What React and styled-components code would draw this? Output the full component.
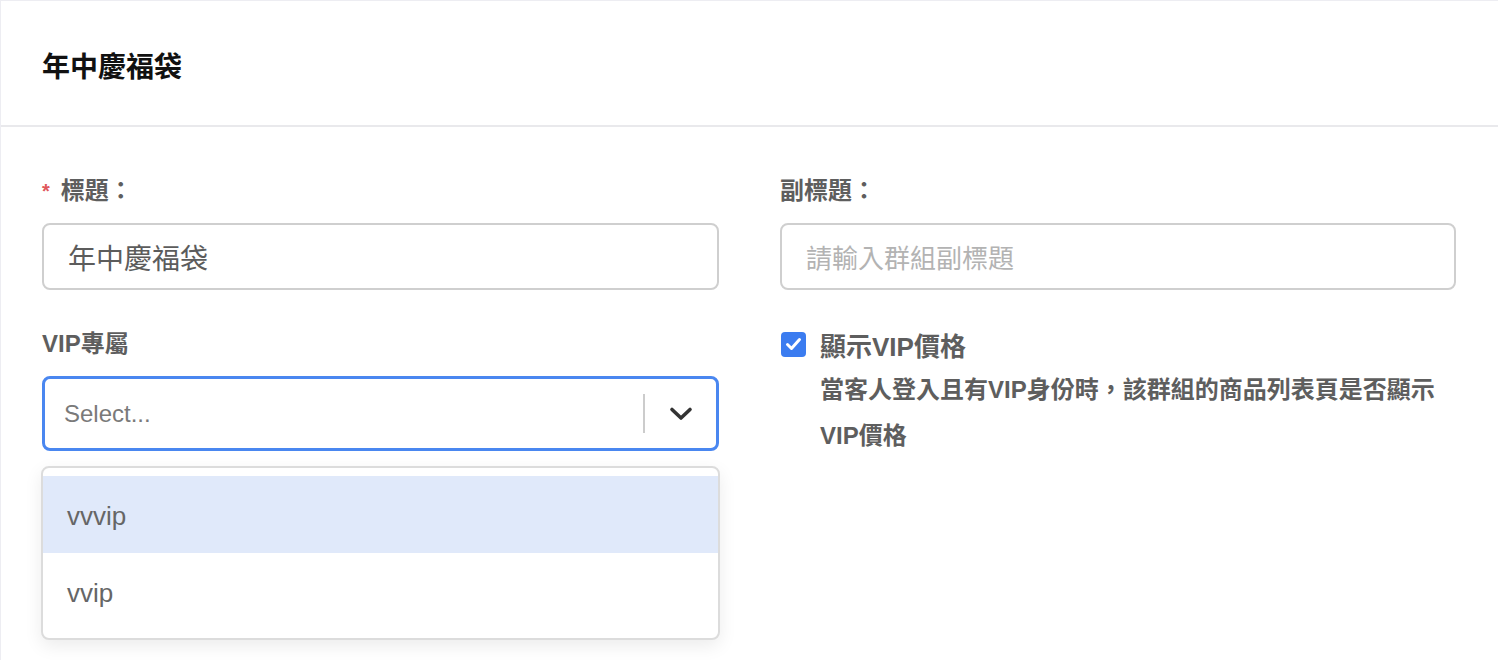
import React from "react";
import styled, { createGlobalStyle } from "styled-components";

const Global = createGlobalStyle`
  html, body { margin: 0; padding: 0; background: #fff; }
  body {
    font-family: "Liberation Sans", "Noto Sans CJK TC", sans-serif;
    -webkit-font-smoothing: antialiased;
  }
  * { box-sizing: border-box; }
`;

const Card = styled.div`
  background: #fff;
  border-top: 1px solid #ededf2;
  border-left: 1px solid #ededf2;
  min-height: 660px;
`;

const Header = styled.div`
  height: 126px;
  display: flex;
  align-items: center;
  padding: 0 41px;
  border-bottom: 2px solid #e9e9ec;
`;

const Title = styled.h1`
  margin: 0;
  font-size: 28px;
  font-weight: 700;
  color: #111;
  padding-top: 4px;
`;

const Body = styled.div`
  display: grid;
  grid-template-columns: 677px 676px;
  column-gap: 61px;
  padding: 49px 41px 0;
`;

const Column = styled.div`
  display: flex;
  flex-direction: column;
`;

const Label = styled.div`
  font-size: 24px;
  font-weight: 700;
  line-height: 30px;
  color: #5e5e5e;
  display: flex;
  align-items: center;
  margin-top: ${(p) => p.$mt || 0}px;
`;

const Required = styled.span`
  color: #e0575b;
  font-size: 20px;
  margin-right: 11px;
`;

const TextInput = styled.div`
  margin-top: 17px;
  height: 67px;
  border: 2px solid #cfcfcf;
  border-radius: 8px;
  display: flex;
  align-items: center;
  padding: 0 24px;
  font-size: ${(p) => (p.$placeholder ? 26 : 28)}px;
  color: ${(p) => (p.$placeholder ? "#b3b3b3" : "#5c5c5c")};
`;

const SelectWrap = styled.div`
  position: relative;
  margin-top: 17px;
`;

const SelectBox = styled.div`
  height: 75px;
  border: 3px solid #4a87f0;
  border-radius: 8px;
  display: flex;
  align-items: center;
  padding-left: 19px;
`;

const SelectPlaceholder = styled.div`
  flex: 1;
  font-size: 24px;
  color: #7a7a7a;
`;

const Separator = styled.div`
  width: 2px;
  height: 39px;
  background: #cccccc;
`;

const Indicator = styled.div`
  width: 71px;
  display: flex;
  justify-content: center;
  align-items: center;
  color: #333;
`;

const Menu = styled.div`
  position: absolute;
  left: -1px;
  right: -1px;
  top: calc(100% + 15px);
  background: #fff;
  border: 2px solid #dcdcdc;
  border-radius: 8px;
  padding: 8px 0;
  box-shadow: 0 6px 18px rgba(0, 0, 0, 0.08);
`;

const Option = styled.div`
  height: 77px;
  display: flex;
  align-items: center;
  padding-left: 24px;
  padding-top: 3px;
  font-size: 26px;
  color: #666;
  background: ${(p) => (p.$active ? "#e0e9fa" : "#fff")};
`;

const CheckRow = styled.div`
  display: flex;
  align-items: center;
  margin-top: 39px;
  height: 30px;
`;

const CheckBox = styled.div`
  width: 25px;
  height: 25px;
  border-radius: 4px;
  background: #3b7cf0;
  display: flex;
  align-items: center;
  justify-content: center;
  margin-left: 1px;
  margin-right: 14px;
`;

const CheckLabel = styled.div`
  font-size: 26px;
  font-weight: 700;
  color: #5e5e5e;
`;

const Description = styled.div`
  margin-top: 8px;
  padding-left: 40px;
  font-size: 24px;
  font-weight: 700;
  line-height: 46px;
  color: #5e5e5e;
  max-width: 666px;
`;

export default function App() {
  return (
    <>
      <Global />
      <Card>
        <Header>
          <Title>年中慶福袋</Title>
        </Header>
        <Body>
          <Column>
            <Label>
              <Required>*</Required>標題：
            </Label>
            <TextInput>年中慶福袋</TextInput>
            <Label $mt={39}>VIP專屬</Label>
            <SelectWrap>
              <SelectBox>
                <SelectPlaceholder>Select...</SelectPlaceholder>
                <Separator />
                <Indicator>
                  <svg width="24" height="16" viewBox="0 0 24 16">
                    <polyline
                      points="3,3.5 12,12 21,3.5"
                      fill="none"
                      stroke="#333"
                      strokeWidth="3.6"
                      strokeLinecap="round"
                      strokeLinejoin="round"
                    />
                  </svg>
                </Indicator>
              </SelectBox>
              <Menu>
                <Option $active>vvvip</Option>
                <Option>vvip</Option>
              </Menu>
            </SelectWrap>
          </Column>
          <Column>
            <Label>副標題：</Label>
            <TextInput $placeholder>請輸入群組副標題</TextInput>
            <CheckRow>
              <CheckBox>
                <svg width="17" height="14" viewBox="0 0 17 14">
                  <polyline
                    points="2.5,7.5 6.5,11.5 14.5,2.5"
                    fill="none"
                    stroke="#fff"
                    strokeWidth="3"
                    strokeLinecap="round"
                    strokeLinejoin="round"
                  />
                </svg>
              </CheckBox>
              <CheckLabel>顯示VIP價格</CheckLabel>
            </CheckRow>
            <Description>
              當客人登入且有VIP身份時，該群組的商品列表頁是否顯示VIP價格
            </Description>
          </Column>
        </Body>
      </Card>
    </>
  );
}
